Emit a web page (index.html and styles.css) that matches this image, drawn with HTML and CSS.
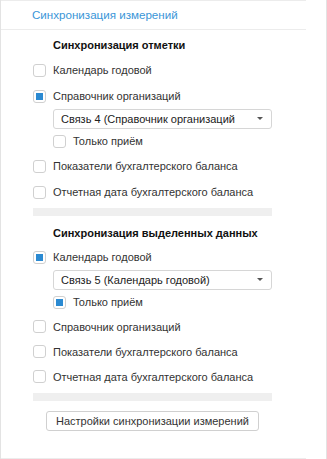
FILE: index.html
```html
<!DOCTYPE html>
<html lang="ru">
<head>
<meta charset="utf-8">
<link rel="stylesheet" href="styles.css">
</head>
<body>
<div class="panel">
  <div class="content">
    <div class="header">Синхронизация измерений</div>
    <div class="body">
      <div class="title">Синхронизация отметки</div>
      <label class="row"><span class="cb"></span>Календарь годовой</label>
      <label class="row"><span class="cb checked"></span>Справочник организаций</label>
      <div class="select"><span class="select-text">Связь 4 (Справочник организаций</span><span class="arrow"></span></div>
      <label class="row sub"><span class="cb"></span>Только приём</label>
      <label class="row"><span class="cb"></span>Показатели бухгалтерского баланса</label>
      <label class="row"><span class="cb"></span>Отчетная дата бухгалтерского баланса</label>
      <div class="bar"></div>

      <div class="title title2">Синхронизация выделенных данных</div>
      <label class="row"><span class="cb checked"></span>Календарь годовой</label>
      <div class="select"><span class="select-text">Связь 5 (Календарь годовой)</span><span class="arrow"></span></div>
      <label class="row sub"><span class="cb checked"></span>Только приём</label>
      <label class="row r25"><span class="cb"></span>Справочник организаций</label>
      <label class="row r25"><span class="cb"></span>Показатели бухгалтерского баланса</label>
      <label class="row r25"><span class="cb"></span>Отчетная дата бухгалтерского баланса</label>
      <div class="bar bar2"></div>
      <div class="btn-wrap"><button class="btn">Настройки синхронизации измерений</button></div>
    </div>
  </div>
</div>
</body>
</html>
```
FILE: styles.css
```css
html, body {
  margin: 0;
  padding: 0;
  background: #fff;
}
body {
  font-family: "Liberation Sans", Arial, sans-serif;
  font-size: 11px;
  color: #333;
}
.panel {
  box-sizing: border-box;
  width: 327px;
  height: 459px;
  border-left: 1px solid #e3e3e3;
  border-right: 1px solid #e3e3e3;
  overflow: hidden;
}
.content {
  box-sizing: border-box;
  width: 305px;
  height: 459px;
  border-top: 1px solid #ececec;
  border-bottom: 1px solid #ececec;
}
.header {
  height: 28px;
  line-height: 28px;
  padding-left: 31px;
  font-size: 11.6px;
  color: #3a96d8;
  border-bottom: 1px solid #ececec;
}
.body {
  padding-left: 32px;
}
.title {
  height: 20px;
  line-height: 20px;
  margin-top: 5px;
  padding-left: 20px;
  font-weight: bold;
  color: #111;
  margin-bottom: 2px;
}
.title2 {
  margin-top: 7px;
  margin-bottom: 1px;
}
.row {
  display: flex;
  align-items: center;
  height: 26px;
  gap: 7px;
}
.row.sub {
  height: 24px;
  padding-left: 20px;
}
.row.r25 {
  height: 25px;
}
.cb {
  box-sizing: border-box;
  width: 13px;
  height: 13px;
  border: 1px solid #d0d0d0;
  border-radius: 3px;
  background: #fff;
  display: flex;
  align-items: center;
  justify-content: center;
  flex: none;
}
.cb.checked::after {
  content: "";
  width: 7px;
  height: 7px;
  background: #2b8ad2;
}
.select {
  box-sizing: border-box;
  margin-left: 20px;
  width: 219px;
  height: 20px;
  border: 1px solid #d6d6d6;
  border-radius: 3px;
  display: flex;
  align-items: center;
  padding-left: 7px;
  padding-right: 8px;
  color: #222;
}
.select-text {
  flex: 1;
  white-space: nowrap;
  overflow: hidden;
}
.arrow {
  width: 0;
  height: 0;
  border-left: 3px solid transparent;
  border-right: 3px solid transparent;
  border-top: 3px solid #555;
  margin-bottom: 1px;
}
.bar {
  width: 239px;
  height: 8px;
  background: #efefef;
  margin-top: 3px;
}
.bar2 {
  margin-top: 4px;
}
.btn-wrap {
  width: 239px;
  display: flex;
  justify-content: center;
  margin-top: 10px;
}
.btn {
  box-sizing: border-box;
  width: 213px;
  height: 20px;
  padding: 0;
  border: 1px solid #d0d0d0;
  border-radius: 3px;
  background: #fff;
  font-family: "Liberation Sans", Arial, sans-serif;
  font-size: 11px;
  color: #333;
}
```
